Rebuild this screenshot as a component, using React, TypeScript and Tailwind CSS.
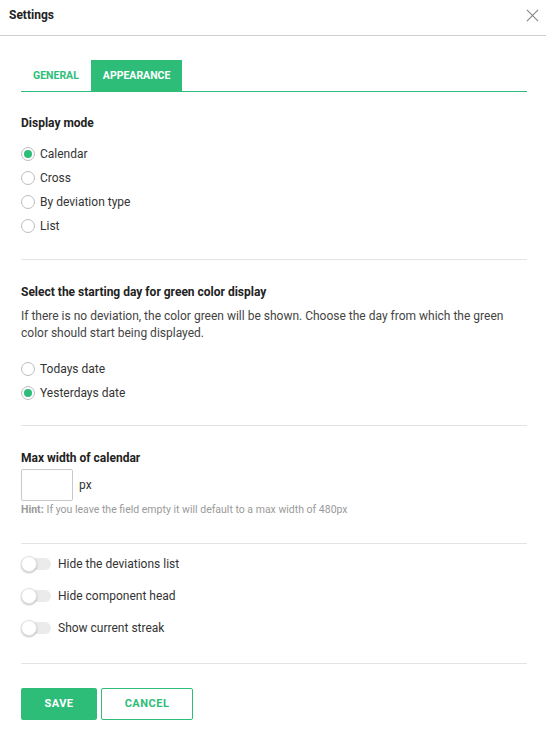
import React from "react";

function Radio({ label, checked }: { label: string; checked?: boolean }) {
  return (
    <div className="flex h-[24px] items-center">
      <span className="flex h-[14px] w-[14px] items-center justify-center rounded-full border border-[#bdbdbd] bg-white">
        {checked && <span className="h-[8px] w-[8px] rounded-full bg-[#2dbd78]" />}
      </span>
      <span className="ml-[5px] text-[12px] text-[#333]">{label}</span>
    </div>
  );
}

function Toggle({ label }: { label: string }) {
  return (
    <div className="flex h-[32px] items-center">
      <span className="relative flex h-[16px] w-[30px] items-center">
        <span className="h-[12px] w-[30px] rounded-full bg-[#ebebeb]" />
        <span className="absolute left-0 top-0 h-[16px] w-[16px] rounded-full border border-[#e4e4e4] bg-white shadow-[0_1px_2px_rgba(0,0,0,0.25)]" />
      </span>
      <span className="ml-[7px] text-[12px] text-[#333]">{label}</span>
    </div>
  );
}

export default function App() {
  return (
    <div className="h-[740px] w-[546px] bg-white font-['Roboto',sans-serif] text-[#333]">
      <div className="flex h-[36px] items-center justify-between border-b border-[#cfcfcf] pl-[9px] pr-[7px] pb-[5px]">
        <span className="text-[12px] font-bold text-[#222]">Settings</span>
        <svg width="13" height="13" viewBox="0 0 14 14" className="mt-[1px]">
          <path d="M1 1 L13 13 M13 1 L1 13" stroke="#8a8a8a" strokeWidth="1.3" fill="none" />
        </svg>
      </div>
      <div className="pl-[21px] pr-[19px]">
        <div className="mt-[24px] flex h-[32px] border-b border-[#2dbd78]">
          <div className="flex h-[31px] items-center px-[12px] text-[10.5px] font-bold uppercase text-[#2dbd78]">General</div>
          <div className="flex h-[31px] items-center bg-[#2dbd78] px-[12px] text-[10.5px] font-bold uppercase text-white">Appearance</div>
        </div>

        <div className="mt-[23px] flex h-[16px] items-center text-[12px] font-bold text-[#222]">Display mode</div>
        <div className="mt-[11px]">
          <Radio label="Calendar" checked />
          <Radio label="Cross" />
          <Radio label="By deviation type" />
          <Radio label="List" />
        </div>
        <div className="mt-[21px] border-t border-[#e3e3e3]" />

        <div className="mt-[24px] flex h-[16px] items-center text-[12px] font-bold text-[#222]">Select the starting day for green color display</div>
        <p className="mt-[8px] text-[12px] leading-[17px] text-[#444]">
          If there is no deviation, the color green will be shown. Choose the day from which the green color should start being displayed.
        </p>
        <div className="mt-[15px]">
          <Radio label="Todays date" />
          <Radio label="Yesterdays date" checked />
        </div>
        <div className="mt-[20px] border-t border-[#e3e3e3]" />

        <div className="mt-[24px] flex h-[16px] items-center text-[12px] font-bold text-[#222]">Max width of calendar</div>
        <div className="mt-[3px] flex items-start">
          <div className="h-[32px] w-[52px] rounded-[2px] border border-[#c9c9c9]" />
          <span className="ml-[6px] mt-[7px] text-[12px] text-[#333]">px</span>
        </div>
        <div className="mt-[2px] flex h-[14px] items-center text-[10.5px] text-[#9a9a9a]">
          <span className="font-bold">Hint:</span>
          <span className="ml-[3px]">If you leave the field empty it will default to a max width of 480px</span>
        </div>
        <div className="mt-[26px] border-t border-[#e3e3e3]" />

        <div className="mt-[4px]">
          <Toggle label="Hide the deviations list" />
          <Toggle label="Hide component head" />
          <Toggle label="Show current streak" />
        </div>
        <div className="mt-[19px] border-t border-[#e3e3e3]" />

        <div className="mt-[24px] flex gap-[4px]">
          <button className="flex h-[32px] w-[76px] items-center justify-center rounded-[2px] bg-[#2dbd78] text-[11px] font-bold uppercase tracking-[0.5px] text-white">Save</button>
          <button className="flex h-[32px] w-[92px] items-center justify-center rounded-[2px] border border-[#2dbd78] bg-white text-[11px] font-bold uppercase tracking-[0.5px] text-[#2dbd78]">Cancel</button>
        </div>
      </div>
    </div>
  );
}
